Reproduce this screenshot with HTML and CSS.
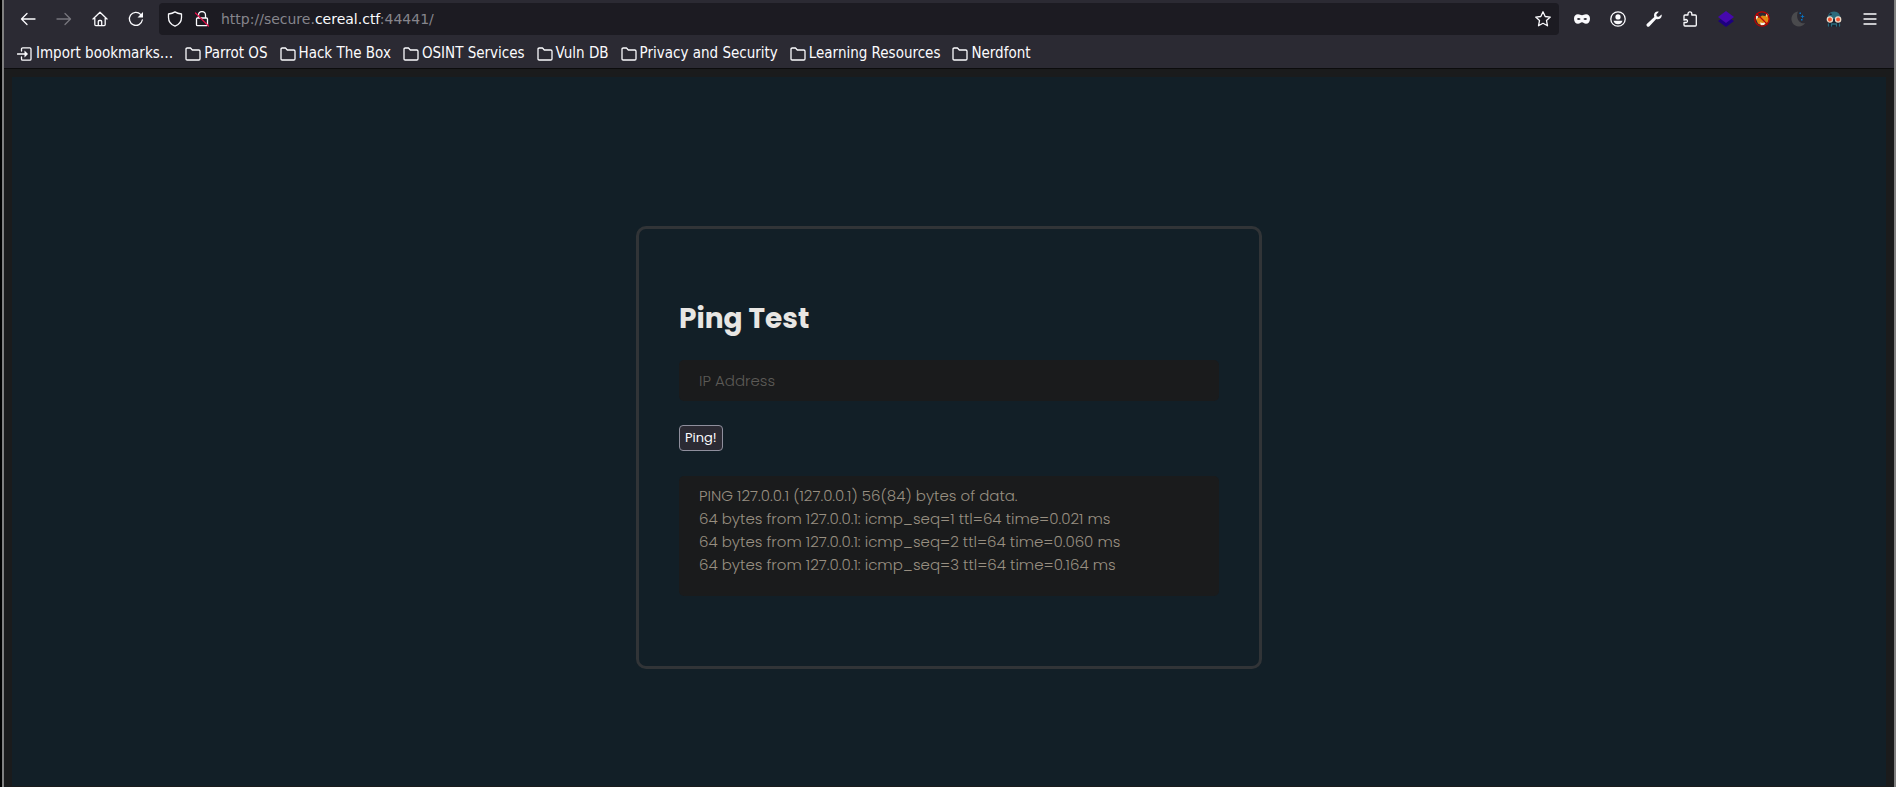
FILE: index.html
```html
<!DOCTYPE html>
<html lang="en">
<head>
<meta charset="utf-8">
<title>Ping Test</title>
<link rel="stylesheet" href="styles.css">
</head>
<body>
<div class="window">
  <header class="chrome">
    <nav class="toolbar" aria-label="Navigation">
      <button class="tool" aria-label="Back"><svg viewBox="0 0 16 16"><path d="M15 8H2M7 2.500L1.500 8 7 13.500"/></svg></button>
      <button class="tool dim" aria-label="Forward"><svg viewBox="0 0 16 16"><path d="M1 8h13M9 2.500L14.500 8 9 13.500"/></svg></button>
      <button class="tool" aria-label="Home"><svg viewBox="0 0 16 16"><path d="M1 8L8 1.200 15 8M2.800 7v6.600q0 1 1 1h8.400q1 0 1-1V7M6.300 14.500V10.500q0-1 1-1h1.400q1 0 1 1v4"/></svg></button>
      <button class="tool" aria-label="Reload"><svg viewBox="0 0 16 16"><path d="M14.300 9A6.500 6.500 0 1 1 12.600 3.400"/><path class="solid" d="M15 1v5.500h-5.500z"/></svg></button>
      <div class="address">
        <svg viewBox="0 0 16 16"><path d="M8 .9C6 2.200 4 2.700 1.500 3v3.500c0 4 2.200 7 6.500 8.700 4.300-1.700 6.500-4.700 6.500-8.700V3C12 2.700 10 2.200 8 .9z"/></svg>
        <svg viewBox="0 0 16 16"><path d="M4.500 7V4a3.500 3.500 0 0 1 7 0v3M3.500 7h9q1 0 1 1v5.700q0 1-1 1h-9q-1 0-1-1V8q0-1 1-1z"/><path class="slash" d="M1.500 2L14.500 15"/></svg>
        <a class="url" href="#">http://secure.<b>cereal.ctf</b>:44441/</a>
        <button class="star" aria-label="Bookmark this page"><svg viewBox="0 0 16 16"><path d="M8 .8l2.200 4.700 5.100.6-3.800 3.500 1 5.200L8 12.300l-4.500 2.500 1-5.200L.7 6.100l5.100-.6z"/></svg></button>
      </div>
      <div class="extensions">
        <button class="tool" aria-label="Private mask"><svg viewBox="0 0 16 16"><path class="solid" fill-rule="evenodd" d="M4 3.200c2 0 2.500 1 4 1s2-1 4-1c2.500 0 4 1.700 4 4.500 0 3-1.700 5.100-4 5.100-2 0-2.500-1.600-4-1.600s-2 1.600-4 1.600c-2.300 0-4-2.100-4-5.100 0-2.800 1.500-4.500 4-4.500zM2.800 8q1.800-2.200 3.900 0-1.900 2.200-3.900 0zm6.500 0q2.100-2.200 3.900 0-2 2.200-3.900 0z"/></svg></button>
        <button class="tool" aria-label="Account"><svg viewBox="0 0 16 16"><circle cx="8" cy="8" r="7.200"/><circle class="solid" cx="8" cy="5.900" r="2.600"/><path class="solid" d="M3.500 9.700h9q-1 3.600-4.500 3.600T3.500 9.700z"/></svg></button>
        <button class="tool" aria-label="Developer tools"><svg viewBox="0 0 16 16"><path class="solid" d="M15.600 3.500l-2.800 2.300-2-.4-.5-2L12.800.7C10.300-.1 8 1.700 8 4.300c0 .6.100 1.100.3 1.600L.8 13q-.8 1.200.2 2.200t2.200.2l7-7.400c3 1 6.200-1.200 5.400-4.500z"/></svg></button>
        <button class="tool" aria-label="Extensions"><svg viewBox="0 0 16 16"><path d="M2 9V5q0-1 1-1h3V2.700a1.900 1.900 0 0 1 3.800 0V4h3.500q1 0 1 1v9q0 1-1 1H3q-1 0-1-1v-2.500h2a1.500 1.500 0 0 0 0-3z"/></svg></button>
        <button class="tool" aria-label="Wappalyzer"><svg viewBox="0 0 16 16"><path fill="#1d0080" stroke="none" d="M0 10L8 5l8 5-8 6z"/><path fill="#4608ad" stroke="none" d="M0 6L8 0l8 6-8 6z"/></svg></button>
        <button class="tool" aria-label="Proxy"><svg viewBox="0 0 16 16"><path fill="#e08a14" stroke="none" d="M1.500 7l4-.5L8 4.500l3 .5 3-2.500 1 5.500-2 4.500-5 2-4-2z"/><path fill="#f2efe9" stroke="none" d="M1.500 4.500l3 1-2 3zM12 2l2.500 1.500-2 2.500zM6 11.500l3 .5 3-1.500-2 3.500-3 .3z"/><circle cx="8" cy="8" r="7.200" stroke="#c00000"/><path stroke="#c00000" d="M3 3l10 10"/></svg></button>
        <button class="tool" aria-label="Dark mode"><svg viewBox="0 0 16 16"><path fill="#4a4a4d" stroke="none" d="M8 .5A7.500 7.500 0 1 0 15.200 12C10 13.500 5 7.500 8 .5z"/><path fill="#0876c8" stroke="none" d="M9.500 1.500H11V3H9.500zM12.500 3.200l.6 1.700 1.700.6-1.700.6-.6 1.700-.6-1.700-1.700-.6 1.700-.6zM11 8h1.500v1.500H11z"/></svg></button>
        <button class="tool" aria-label="Spectacles"><svg viewBox="0 0 16 16"><path fill="#2b6b7c" stroke="none" d="M1.500 8q0-7.500 6.500-7.500T14.500 8z"/><path fill="#16222e" stroke="none" d="M3 4l2-2 1 2zM2 8h12v7.500H2z"/><circle cx="3.900" cy="8.500" r="2.600" fill="#f0512d" stroke="#ead9c8"/><circle cx="12.100" cy="8.500" r="2.600" fill="#f0512d" stroke="#ead9c8"/><path stroke="#2b6b7c" d="M2.500 15v-2M5.500 15v-2h5v2M13.500 15v-2"/></svg></button>
        <button class="tool" aria-label="Menu"><svg viewBox="0 0 16 16"><path d="M2 3h12M2 8h12M2 13h12"/></svg></button>
      </div>
    </nav>
    <nav class="bookmarks" aria-label="Bookmarks">
      <a href="#"><svg viewBox="0 0 16 16"><path d="M4.500 5V3q0-1.200 1.200-1.200h7.100Q14 1.800 14 3v10q0 1.200-1.200 1.200H5.700Q4.500 14.200 4.500 13v-2M.5 8H9"/><path class="solid" d="M7.500 4.500L11 8l-3.500 3.500z"/></svg>Import bookmarks…</a>
      <a href="#"><svg viewBox="0 0 16 16"><use href="#folder"/></svg>Parrot OS</a>
      <a href="#"><svg viewBox="0 0 16 16"><use href="#folder"/></svg>Hack The Box</a>
      <a href="#"><svg viewBox="0 0 16 16"><use href="#folder"/></svg>OSINT Services</a>
      <a href="#"><svg viewBox="0 0 16 16"><use href="#folder"/></svg>Vuln DB</a>
      <a href="#"><svg viewBox="0 0 16 16"><use href="#folder"/></svg>Privacy and Security</a>
      <a href="#"><svg viewBox="0 0 16 16"><use href="#folder"/></svg>Learning Resources</a>
      <a href="#"><svg viewBox="0 0 16 16"><use href="#folder"/></svg>Nerdfont</a>
    </nav>
  </header>
  <main class="page">
    <form class="card">
      <h1>Ping Test</h1>
      <input class="ip" type="text" placeholder="IP Address" aria-label="IP Address">
      <button class="ping" type="button">Ping!</button>
      <pre class="output">PING 127.0.0.1 (127.0.0.1) 56(84) bytes of data.
64 bytes from 127.0.0.1: icmp_seq=1 ttl=64 time=0.021 ms
64 bytes from 127.0.0.1: icmp_seq=2 ttl=64 time=0.060 ms
64 bytes from 127.0.0.1: icmp_seq=3 ttl=64 time=0.164 ms</pre>
    </form>
  </main>
</div>
<svg class="defs" aria-hidden="true"><defs><path id="folder" d="M1 12.800V3.200q0-1.200 1.200-1.200h3.300l1.800 2h6.500Q15 4 15 5.200v7.600q0 1.200-1.200 1.200H2.200Q1 14 1 12.800z"/></defs></svg>
</body>
</html>
```
FILE: styles.css
```css
* {
  box-sizing: border-box;
}

body {
  margin: 0;
  background: #000;
  color: #fbfbfe;
  font-family: "DejaVu Sans", sans-serif;
}

button {
  margin: 0;
  padding: 0;
  border: 0;
  background: none;
  color: inherit;
  font: inherit;
}

a {
  color: inherit;
  text-decoration: none;
}

svg {
  display: block;
  flex: none;
  width: 16px;
  height: 16px;
  fill: none;
  stroke: currentColor;
  stroke-width: 1.3;
  stroke-linecap: round;
  stroke-linejoin: round;
}

.solid {
  fill: currentColor;
  stroke: none;
}

.slash {
  stroke: #e2104a;
}

.defs {
  position: absolute;
  width: 0;
  height: 0;
}

.window {
  display: flex;
  flex-direction: column;
  min-height: 100vh;
  margin-left: 2px;
  border: solid #808080;
  border-width: 0 2px;
  background: #1a1b1c;
}

.chrome {
  background: #2b2a33;
  border-bottom: 1px solid #0c0c0d;
}

.toolbar {
  display: flex;
  align-items: center;
  padding: 3px 6px 1px;
}

.tool {
  display: flex;
  align-items: center;
  justify-content: center;
  width: 36px;
  height: 32px;
}

.dim {
  color: #77767e;
}

.address {
  display: flex;
  flex: 1;
  align-items: center;
  gap: 11px;
  height: 32px;
  margin-left: 5px;
  padding: 0 8px;
  border-radius: 4px;
  background: #1c1b22;
}

.url {
  flex: 1;
  color: #86858c;
  font-size: 14px;
}

.url b {
  color: #fbfbfe;
  font-weight: 400;
}

.extensions {
  display: flex;
  margin-left: 5px;
}

.bookmarks {
  display: flex;
  gap: 12px;
  padding: 9px 13px 6px;
  font-family: "DejaVu Sans Condensed", "DejaVu Sans", sans-serif;
  font-size: 15px;
  line-height: 17px;
}

.bookmarks a {
  display: flex;
  align-items: center;
  gap: 3px;
}

.page {
  display: flex;
  flex: 1;
  align-items: flex-start;
  justify-content: center;
  margin: 8px 8px 1px;
  padding: 149px 0 0;
  background: #121f27;
}

.card {
  display: flex;
  flex-direction: column;
  align-items: flex-start;
  width: 626px;
  padding: 69px 40px 70px;
  border: 3px solid #313437;
  border-radius: 10px;
  font-family: Poppins, Lato, sans-serif;
}

h1 {
  margin: 0 0 20px;
  color: #e8e6e3;
  font-size: 28px;
  line-height: 42px;
}

.ip,
.output {
  width: 100%;
  border: 0;
  border-radius: 5px;
  background: #1a1b1c;
  font-family: inherit;
  font-size: 15px;
  font-weight: 300;
}

.ip {
  height: 41px;
  padding: 0 20px;
  color: #e8e6e3;
}

.ip::placeholder {
  color: #5c5a56;
  opacity: 1;
}

.ping {
  margin: 24px 0 25px;
  padding: 0 5px;
  border: 1px solid #8f8f9d;
  border-radius: 4px;
  background: #2b2a33;
  font-size: 13px;
  line-height: 24px;
}

.output {
  margin: 0;
  padding: 8px 20px 20px;
  color: #988f81;
  line-height: 23px;
}
```
